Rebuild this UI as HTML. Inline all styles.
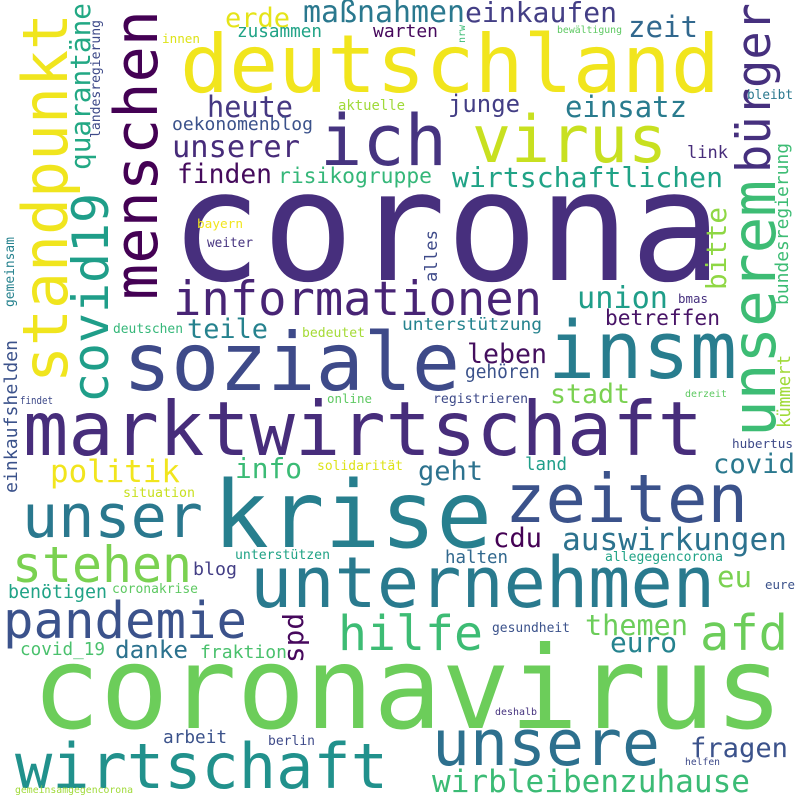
<!DOCTYPE html>
<html><head><meta charset="utf-8"><style>
html,body{margin:0;padding:0;background:#fff;}
svg{display:block}
text{font-family:"DejaVu Sans Mono","Liberation Mono",monospace;}
</style></head><body>
<svg width="800" height="800" viewBox="0 0 800 800" xmlns="http://www.w3.org/2000/svg">
<rect width="800" height="800" fill="#fff"/>
<g lengthAdjust="spacingAndGlyphs">
<!-- big -->
<text x="170" y="280" font-size="153" fill="#472f7d" textLength="552" lengthAdjust="spacingAndGlyphs">corona</text>
<text x="32" y="728" font-size="114" fill="#6ccd5a" textLength="751" lengthAdjust="spacingAndGlyphs">coronavirus</text>
<text x="180" y="92" font-size="80" fill="#f1e51d" textLength="540" lengthAdjust="spacingAndGlyphs">deutschland</text>
<text x="23" y="455" font-size="75" fill="#472d7b" textLength="680" lengthAdjust="spacingAndGlyphs">marktwirtschaft</text>
<text x="123" y="390" font-size="80" fill="#3e4a89" textLength="337" lengthAdjust="spacingAndGlyphs">soziale</text>
<text x="548" y="378" font-size="79" fill="#287d8e" textLength="189" lengthAdjust="spacingAndGlyphs">insm</text>
<text x="213" y="547" font-size="93" fill="#277f8e" textLength="279" lengthAdjust="spacingAndGlyphs">krise</text>
<text x="505" y="522" font-size="67" fill="#3b528b" textLength="243" lengthAdjust="spacingAndGlyphs">zeiten</text>
<text x="22" y="537" font-size="60" fill="#2a788e" textLength="181" lengthAdjust="spacingAndGlyphs">unser</text>
<text x="250" y="607" font-size="70" fill="#297a8e" textLength="465" lengthAdjust="spacingAndGlyphs">unternehmen</text>
<text x="3" y="638" font-size="51" fill="#3b528b" textLength="244" lengthAdjust="spacingAndGlyphs">pandemie</text>
<text x="12" y="582" font-size="50" fill="#7ad151" textLength="180" lengthAdjust="spacingAndGlyphs">stehen</text>
<text x="338" y="650" font-size="48" fill="#3dbc74" textLength="145" lengthAdjust="spacingAndGlyphs">hilfe</text>
<text x="700" y="650" font-size="49" fill="#6ccd5a" textLength="88" lengthAdjust="spacingAndGlyphs">afd</text>
<text x="432" y="765" font-size="63" fill="#2d708e" textLength="228" lengthAdjust="spacingAndGlyphs">unsere</text>
<text x="15" y="788" font-size="62" fill="#21918c" textLength="373" lengthAdjust="spacingAndGlyphs">wirtschaft</text>
<text x="432" y="792" font-size="31" fill="#3bbb75" textLength="318" lengthAdjust="spacingAndGlyphs">wirbleibenzuhause</text>
<text x="690" y="757" font-size="27" fill="#3b528b" textLength="98" lengthAdjust="spacingAndGlyphs">fragen</text>
<text x="320" y="165" font-size="70" fill="#463480" textLength="127" lengthAdjust="spacingAndGlyphs">ich</text>
<text x="472" y="162" font-size="65" fill="#c8e020" textLength="195" lengthAdjust="spacingAndGlyphs">virus</text>
<text x="173" y="315" font-size="47" fill="#482475" textLength="369" lengthAdjust="spacingAndGlyphs">informationen</text>

<!-- medium/small horizontal -->
<text x="225" y="27" font-size="27" fill="#e5e419" textLength="65" lengthAdjust="spacingAndGlyphs">erde</text>
<text x="303" y="22" font-size="30" fill="#2a788e" textLength="162" lengthAdjust="spacingAndGlyphs">maßnahmen</text>
<text x="465" y="22" font-size="28" fill="#433e85" textLength="152" lengthAdjust="spacingAndGlyphs">einkaufen</text>
<text x="237" y="37" font-size="17.7" fill="#20a386" textLength="85" lengthAdjust="spacingAndGlyphs">zusammen</text>
<text x="373" y="37" font-size="18" fill="#46085c" textLength="65" lengthAdjust="spacingAndGlyphs">warten</text>
<text x="162" y="43" font-size="12.7" fill="#dde318" textLength="38" lengthAdjust="spacingAndGlyphs">innen</text>
<text x="628" y="37" font-size="29" fill="#31688e" textLength="70" lengthAdjust="spacingAndGlyphs">zeit</text>
<text x="557" y="33" font-size="9.8" fill="#5ec962" textLength="65" lengthAdjust="spacingAndGlyphs">bewältigung</text>
<text x="207" y="117" font-size="29" fill="#453882" textLength="86" lengthAdjust="spacingAndGlyphs">heute</text>
<text x="338" y="110" font-size="14" fill="#a0da39" textLength="67" lengthAdjust="spacingAndGlyphs">aktuelle</text>
<text x="172" y="130" font-size="18" fill="#3b528b" textLength="141" lengthAdjust="spacingAndGlyphs">oekonomenblog</text>
<text x="172" y="157" font-size="30.5" fill="#472c7a" textLength="128" lengthAdjust="spacingAndGlyphs">unserer</text>
<text x="177" y="183" font-size="26.4" fill="#450b5c" textLength="95" lengthAdjust="spacingAndGlyphs">finden</text>
<text x="278" y="183" font-size="21.4" fill="#35b779" textLength="154" lengthAdjust="spacingAndGlyphs">risikogruppe</text>
<text x="448" y="112" font-size="24" fill="#433e85" textLength="72" lengthAdjust="spacingAndGlyphs">junge</text>
<text x="565" y="117" font-size="29" fill="#297b8e" textLength="122" lengthAdjust="spacingAndGlyphs">einsatz</text>
<text x="747" y="99" font-size="13" fill="#2a788e" textLength="46" lengthAdjust="spacingAndGlyphs">bleibt</text>
<text x="687" y="158" font-size="17" fill="#472c7a" textLength="41" lengthAdjust="spacingAndGlyphs">link</text>
<text x="452" y="187" font-size="28" fill="#20a386" textLength="271" lengthAdjust="spacingAndGlyphs">wirtschaftlichen</text>
<text x="197" y="228" font-size="12.8" fill="#f1e51d" textLength="46" lengthAdjust="spacingAndGlyphs">bayern</text>
<text x="207" y="247" font-size="13" fill="#46337f" textLength="46" lengthAdjust="spacingAndGlyphs">weiter</text>
<text x="577" y="308" font-size="30" fill="#1f9e89" textLength="91" lengthAdjust="spacingAndGlyphs">union</text>
<text x="678" y="303" font-size="12.5" fill="#46307e" textLength="30" lengthAdjust="spacingAndGlyphs">bmas</text>
<text x="605" y="325" font-size="21" fill="#481467" textLength="115" lengthAdjust="spacingAndGlyphs">betreffen</text>
<text x="402" y="330" font-size="16.7" fill="#25838e" textLength="140" lengthAdjust="spacingAndGlyphs">unterstützung</text>
<text x="113" y="333" font-size="13" fill="#35b779" textLength="70" lengthAdjust="spacingAndGlyphs">deutschen</text>
<text x="187" y="338" font-size="27" fill="#26828e" textLength="81" lengthAdjust="spacingAndGlyphs">teile</text>
<text x="302" y="337" font-size="13" fill="#a5db36" textLength="63" lengthAdjust="spacingAndGlyphs">bedeutet</text>
<text x="467" y="363" font-size="27" fill="#440f5e" textLength="80" lengthAdjust="spacingAndGlyphs">leben</text>
<text x="465" y="378" font-size="18.7" fill="#3b528b" textLength="75" lengthAdjust="spacingAndGlyphs">gehören</text>
<text x="550" y="403" font-size="27" fill="#7ad151" textLength="80" lengthAdjust="spacingAndGlyphs">stadt</text>
<text x="433" y="403" font-size="13" fill="#3e4a89" textLength="95" lengthAdjust="spacingAndGlyphs">registrieren</text>
<text x="685" y="397" font-size="10" fill="#5ec962" textLength="42" lengthAdjust="spacingAndGlyphs">derzeit</text>
<text x="20" y="404" font-size="11" fill="#3e4a89" textLength="33" lengthAdjust="spacingAndGlyphs">findet</text>
<text x="327" y="403" font-size="12.5" fill="#5ec962" textLength="45" lengthAdjust="spacingAndGlyphs">online</text>
<text x="50" y="482" font-size="31" fill="#f1e51d" textLength="130" lengthAdjust="spacingAndGlyphs">politik</text>
<text x="235" y="478" font-size="28" fill="#3bbb75" textLength="67" lengthAdjust="spacingAndGlyphs">info</text>
<text x="317" y="470" font-size="13" fill="#dde318" textLength="86" lengthAdjust="spacingAndGlyphs">solidarität</text>
<text x="123" y="497" font-size="13.3" fill="#c8e020" textLength="72" lengthAdjust="spacingAndGlyphs">situation</text>
<text x="235" y="559" font-size="13.2" fill="#20a386" textLength="95" lengthAdjust="spacingAndGlyphs">unterstützen</text>
<text x="193" y="575" font-size="18" fill="#433e85" textLength="44" lengthAdjust="spacingAndGlyphs">blog</text>
<text x="8" y="598" font-size="18.3" fill="#20a386" textLength="99" lengthAdjust="spacingAndGlyphs">benötigen</text>
<text x="112" y="593" font-size="13" fill="#5ec962" textLength="86" lengthAdjust="spacingAndGlyphs">coronakrise</text>
<text x="20" y="655" font-size="17.7" fill="#4ac16d" textLength="85" lengthAdjust="spacingAndGlyphs">covid_19</text>
<text x="115" y="658" font-size="24" fill="#2c728e" textLength="73" lengthAdjust="spacingAndGlyphs">danke</text>
<text x="200" y="658" font-size="18" fill="#4ac16d" textLength="87" lengthAdjust="spacingAndGlyphs">fraktion</text>
<text x="163" y="743" font-size="17.8" fill="#3b528b" textLength="64" lengthAdjust="spacingAndGlyphs">arbeit</text>
<text x="268" y="745" font-size="13" fill="#3e4a89" textLength="47" lengthAdjust="spacingAndGlyphs">berlin</text>
<text x="15" y="793" font-size="9.8" fill="#a0da39" textLength="118" lengthAdjust="spacingAndGlyphs">gemeinsamgegencorona</text>
<text x="418" y="480" font-size="27" fill="#2c728e" textLength="65" lengthAdjust="spacingAndGlyphs">geht</text>
<text x="525" y="470" font-size="17.5" fill="#1f9e89" textLength="42" lengthAdjust="spacingAndGlyphs">land</text>
<text x="713" y="473" font-size="27" fill="#2a788e" textLength="82" lengthAdjust="spacingAndGlyphs">covid</text>
<text x="732" y="448" font-size="12.7" fill="#3e4a89" textLength="61" lengthAdjust="spacingAndGlyphs">hubertus</text>
<text x="493" y="547" font-size="27" fill="#440154" textLength="49" lengthAdjust="spacingAndGlyphs">cdu</text>
<text x="562" y="550" font-size="31" fill="#2c728e" textLength="225" lengthAdjust="spacingAndGlyphs">auswirkungen</text>
<text x="445" y="563" font-size="17.5" fill="#31688e" textLength="63" lengthAdjust="spacingAndGlyphs">halten</text>
<text x="605" y="561" font-size="13" fill="#20a386" textLength="118" lengthAdjust="spacingAndGlyphs">allegegencorona</text>
<text x="717" y="587" font-size="29" fill="#7ad151" textLength="35" lengthAdjust="spacingAndGlyphs">eu</text>
<text x="765" y="589" font-size="12.5" fill="#3b528b" textLength="30" lengthAdjust="spacingAndGlyphs">eure</text>
<text x="585" y="635" font-size="28.6" fill="#6ccd5a" textLength="103" lengthAdjust="spacingAndGlyphs">themen</text>
<text x="492" y="632" font-size="13" fill="#3b528b" textLength="78" lengthAdjust="spacingAndGlyphs">gesundheit</text>
<text x="610" y="652" font-size="28" fill="#25838e" textLength="67" lengthAdjust="spacingAndGlyphs">euro</text>
<text x="495" y="715" font-size="10" fill="#46337f" textLength="42" lengthAdjust="spacingAndGlyphs">deshalb</text>
<text x="685" y="765" font-size="9.7" fill="#3e4a89" textLength="35" lengthAdjust="spacingAndGlyphs">helfen</text>

<!-- vertical -->
<text transform="translate(67,383) rotate(-90)" font-size="62" fill="#f0e51e" textLength="370" lengthAdjust="spacingAndGlyphs">standpunkt</text>
<text transform="translate(90,170) rotate(-90)" font-size="28" fill="#22a884" textLength="167" lengthAdjust="spacingAndGlyphs">quarantäne</text>
<text transform="translate(100,138) rotate(-90)" font-size="13" fill="#3e4a89" textLength="118" lengthAdjust="spacingAndGlyphs">landesregierung</text>
<text transform="translate(108,403) rotate(-90)" font-size="50" fill="#1f9e89" textLength="210" lengthAdjust="spacingAndGlyphs">covid19</text>
<text transform="translate(157,300) rotate(-90)" font-size="60" fill="#440154" textLength="290" lengthAdjust="spacingAndGlyphs">menschen</text>
<text transform="translate(14,307) rotate(-90)" font-size="13" fill="#26828e" textLength="70" lengthAdjust="spacingAndGlyphs">gemeinsam</text>
<text transform="translate(17,493) rotate(-90)" font-size="18" fill="#3b528b" textLength="153" lengthAdjust="spacingAndGlyphs">einkaufshelden</text>
<text transform="translate(770,173) rotate(-90)" font-size="47" fill="#46307e" textLength="170" lengthAdjust="spacingAndGlyphs">bürger</text>
<text transform="translate(775,437) rotate(-90)" font-size="61" fill="#3dbc74" textLength="257" lengthAdjust="spacingAndGlyphs">unserem</text>
<text transform="translate(726,290) rotate(-90)" font-size="27.7" fill="#8fd744" textLength="83" lengthAdjust="spacingAndGlyphs">bitte</text>
<text transform="translate(437,282) rotate(-90)" font-size="17" fill="#3e4a89" textLength="52" lengthAdjust="spacingAndGlyphs">alles</text>
<text transform="translate(788,305) rotate(-90)" font-size="18" fill="#3dbc74" textLength="162" lengthAdjust="spacingAndGlyphs">bundesregierung</text>
<text transform="translate(790,428) rotate(-90)" font-size="17.4" fill="#a0da39" textLength="73" lengthAdjust="spacingAndGlyphs">kümmert</text>
<text transform="translate(303,663) rotate(-90)" font-size="28" fill="#46085c" textLength="50" lengthAdjust="spacingAndGlyphs">spd</text>
<text transform="translate(465,43) rotate(-90)" font-size="10" fill="#3bbb75" textLength="18" lengthAdjust="spacingAndGlyphs">nrw</text>
</g>
</svg>
</body></html>
